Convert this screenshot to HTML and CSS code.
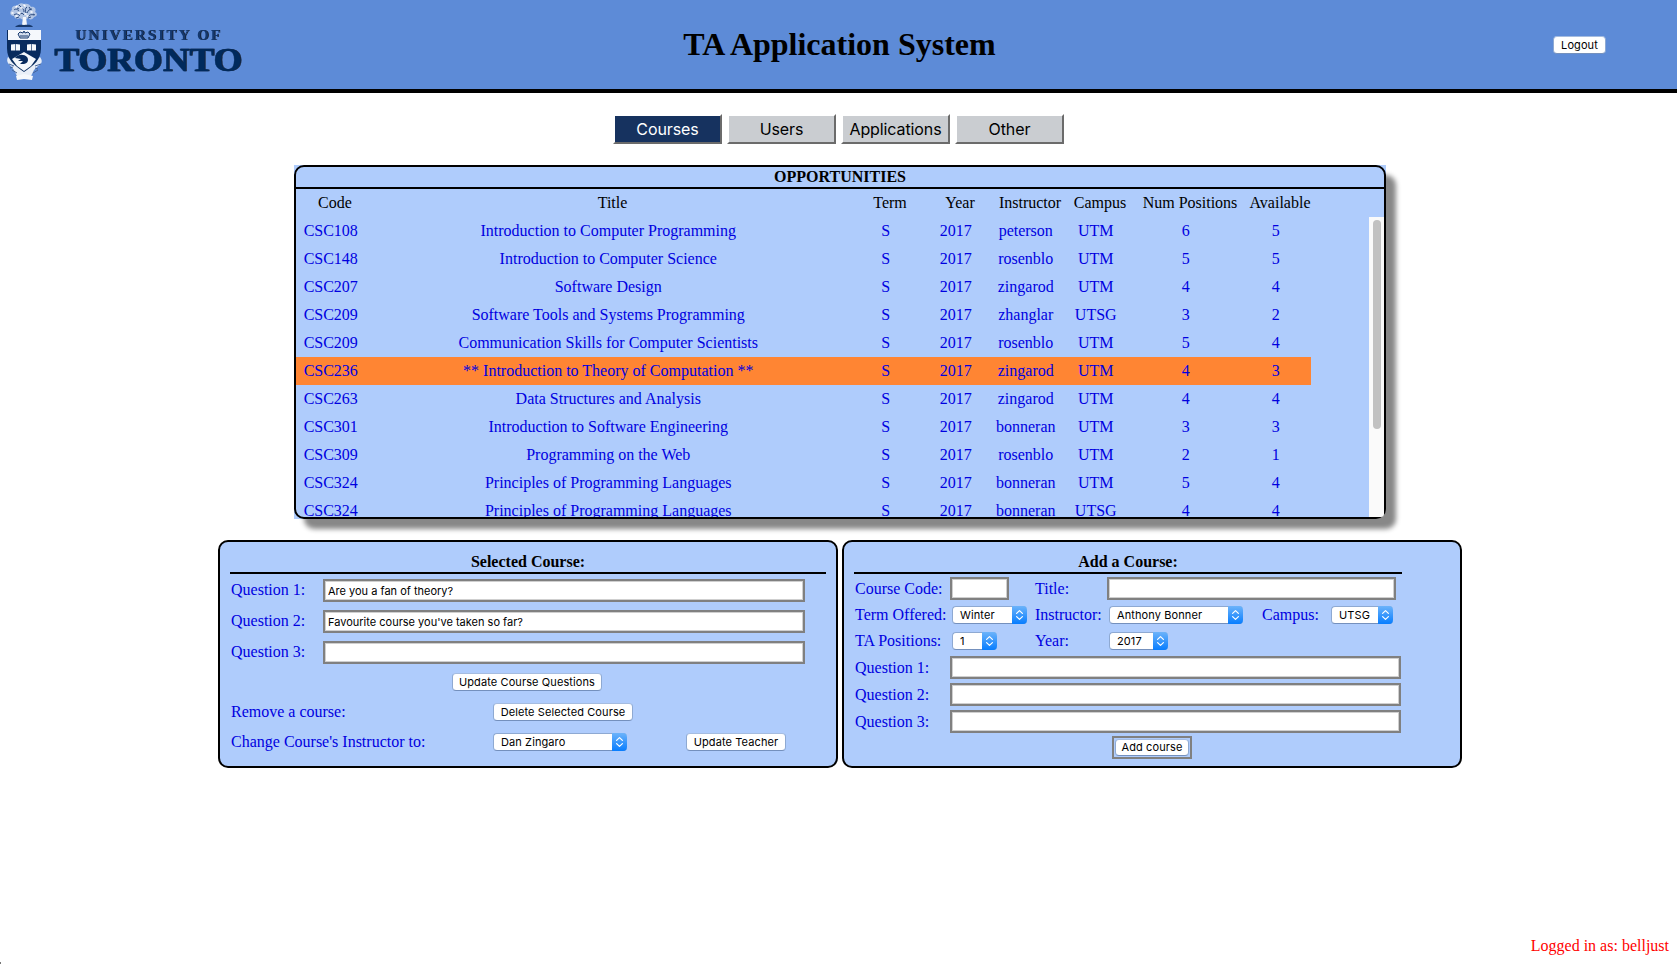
FILE: index.html
```html
<!DOCTYPE html>
<html lang="en">
<head>
<meta charset="utf-8">
<title>TA Application System</title>
<link rel="stylesheet" href="styles.css">
</head>
<body>
<svg class="defs" width="0" height="0">
  <symbol id="arrows" viewBox="0 0 15 18"><path d="M4.6 7.4 7.5 4.6l2.9 2.8M4.6 10.6l2.9 2.8 2.9-2.8" fill="none" stroke="#fff" stroke-width="1.2" stroke-linecap="round" stroke-linejoin="round"/></symbol>
</svg>
<header class="banner">
  <svg class="logo" viewBox="0 0 250 88">
    <g class="tree">
      <path d="M24 4c4-1 6 1 7 3 3-1 6 2 4 5 3 1 2 5-1 5-1 3-5 3-6 1-2 2-6 2-8 0-3 2-6 0-6-2-4 0-5-4-2-6-1-3 2-5 5-4 1-2 4-4 7-2z" fill="#b3c6e4"/>
      <path d="M14 10c2-2 4 0 5 1m-5 4c3-2 4-1 6 1m1-8c2 0 3 2 3 4m3-5c-2 1-2 4-1 6m6-4c-3 0-4 2-5 4m7 2c-3-1-5 0-6 2m-4-2c-1-2-3-2-4-1M19 5l2 2m8 0 2 3m2 4 2 1M17 8l2 1m-3 9 3-1m9 1 3-1" fill="none" stroke="#2d4c80" stroke-width="1"/>
      <path d="M16 7l1-1m7-1 1 1m-13 7 1 0m5 0h2m5 1h1m5-2h1m-11-4h1m5 8h1m-12 0h1" fill="none" stroke="#fff" stroke-width="1.6" stroke-linecap="round"/>
      <path d="M23 17h3l1 8h-5z" fill="#f4f7fb"/>
      <path d="M15 27c3-3 6-2 9-2s7-1 9 2z" fill="#17396d"/>
    </g>
    <path d="M8 57c-2 4 0 7 3 9l3 4 3 6 7 3 7-3 3-6 4-4c4-2 5-5 2-9l-4 3-12 9-12-9z" fill="#e9eff8"/>
    <path d="M9 64l5 2m27-2-6 2m-23 4 5 3m21-3-5 3M10 68l3-1m25 2-3-1" stroke="#46669a" stroke-width="1"/>
    <path d="M7 30h34v18c0 12-7 17-17 24C14 65 7 60 7 48z" fill="#082b5e"/>
    <path d="M8 30h33v10H8z" fill="#f5f8fc"/>
    <path d="M20 38l-2-4 2-2 3 1 1-2 1 2 3-1 2 2-2 4zM20 36h8" fill="#d4dfef" stroke="#17396d" stroke-width="1"/>
    <path d="M11 44.500l4.500-.5 4.500.5v6H11zM27 44.500l4.500-.5 4.500.5v6h-9z" fill="#f5f8fc"/>
    <path d="M15.500 44v7m16-7v7" stroke="#17396d" stroke-width=".7"/>
    <path d="M24 52 12 59l5 7 7 5 7-5 5-7z" fill="#f5f8fc"/>
    <path d="M15 58c3-4 9-4 12-1 2 3 1 6-3 7l-4 0 3-3-5 0 3-2z" fill="#082b5e"/>
    <path d="M16 76l8-2 9 2-1 4-8-1-7 1z" fill="#f5f8fc"/>
    <g class="wordmark">
      <text x="75" y="39.6" class="uni" textLength="145">UNIVERSITY OF</text>
      <text x="54" y="70.5" class="tor" textLength="188" lengthAdjust="spacingAndGlyphs">TORONTO</text>
    </g>
  </svg>
  <h1 class="title">TA Application System</h1>
  <div class="session"><button class="btn logout">Logout</button></div>
</header>

<nav class="tabs">
  <button class="tab active">Courses</button>
  <button class="tab">Users</button>
  <button class="tab">Applications</button>
  <button class="tab">Other</button>
</nav>

<section class="opps">
  <div class="opps-box">
    <h2 class="opps-title">OPPORTUNITIES</h2>
    <div class="row head"><span>Code</span><span>Title</span><span>Term</span><span>Year</span><span>Instructor</span><span>Campus</span><span>Num Positions</span><span>Available</span></div>
    <div class="scroll">
      <div class="rows">
        <div class="row"><span>CSC108</span><span>Introduction to Computer Programming</span><span>S</span><span>2017</span><span>peterson</span><span>UTM</span><span>6</span><span>5</span></div>
        <div class="row"><span>CSC148</span><span>Introduction to Computer Science</span><span>S</span><span>2017</span><span>rosenblo</span><span>UTM</span><span>5</span><span>5</span></div>
        <div class="row"><span>CSC207</span><span>Software Design</span><span>S</span><span>2017</span><span>zingarod</span><span>UTM</span><span>4</span><span>4</span></div>
        <div class="row"><span>CSC209</span><span>Software Tools and Systems Programming</span><span>S</span><span>2017</span><span>zhanglar</span><span>UTSG</span><span>3</span><span>2</span></div>
        <div class="row"><span>CSC209</span><span>Communication Skills for Computer Scientists</span><span>S</span><span>2017</span><span>rosenblo</span><span>UTM</span><span>5</span><span>4</span></div>
        <div class="row selected"><span>CSC236</span><span>** Introduction to Theory of Computation **</span><span>S</span><span>2017</span><span>zingarod</span><span>UTM</span><span>4</span><span>3</span></div>
        <div class="row"><span>CSC263</span><span>Data Structures and Analysis</span><span>S</span><span>2017</span><span>zingarod</span><span>UTM</span><span>4</span><span>4</span></div>
        <div class="row"><span>CSC301</span><span>Introduction to Software Engineering</span><span>S</span><span>2017</span><span>bonneran</span><span>UTM</span><span>3</span><span>3</span></div>
        <div class="row"><span>CSC309</span><span>Programming on the Web</span><span>S</span><span>2017</span><span>rosenblo</span><span>UTM</span><span>2</span><span>1</span></div>
        <div class="row"><span>CSC324</span><span>Principles of Programming Languages</span><span>S</span><span>2017</span><span>bonneran</span><span>UTM</span><span>5</span><span>4</span></div>
        <div class="row"><span>CSC324</span><span>Principles of Programming Languages</span><span>S</span><span>2017</span><span>bonneran</span><span>UTSG</span><span>4</span><span>4</span></div>
      </div>
      <div class="track"><div class="thumb"></div></div>
    </div>
  </div>
</section>

<main class="panels">
  <section class="panel">
    <h3 class="heading">Selected Course:</h3>
    <div class="sel-q"><label>Question 1:</label><input class="field" value="Are you a fan of theory?"></div>
    <div class="sel-q mid"><label>Question 2:</label><input class="field" value="Favourite course you've taken so far?"></div>
    <div class="sel-q"><label>Question 3:</label><input class="field"></div>
    <div class="center"><button class="btn update-q">Update Course Questions</button></div>
    <div class="manage tall"><label>Remove a course:</label><button class="btn delete">Delete Selected Course</button></div>
    <div class="manage"><label>Change Course's Instructor to:</label><span class="select teacher">Dan Zingaro<svg><use href="#arrows"/></svg></span><button class="btn update-t">Update Teacher</button></div>
  </section>
  <section class="panel add">
    <h3 class="heading">Add a Course:</h3>
    <div class="add-row r1"><label>Course Code:</label><input class="field code"><label>Title:</label><input class="field wide-title"></div>
    <div class="add-row r2"><label>Term Offered:</label><span class="select term">Winter<svg><use href="#arrows"/></svg></span><label>Instructor:</label><span class="select instr">Anthony Bonner<svg><use href="#arrows"/></svg></span><label>Campus:</label><span class="select campus">UTSG<svg><use href="#arrows"/></svg></span></div>
    <div class="add-row r3"><label>TA Positions:</label><span class="select count">1<svg><use href="#arrows"/></svg></span><label>Year:</label><span class="select year">2017<svg><use href="#arrows"/></svg></span></div>
    <div class="add-q"><label>Question 1:</label><input class="field"></div>
    <div class="add-q mid"><label>Question 2:</label><input class="field"></div>
    <div class="add-q"><label>Question 3:</label><input class="field"></div>
    <div class="submit"><span class="frame"><button class="btn add-btn">Add course</button></span></div>
  </section>
</main>

<footer class="status"><span class="hint"></span>Logged in as: belljust</footer>
</body>
</html>
```
FILE: styles.css
```css
* { box-sizing: border-box; }
body {
  margin: 0;
  height: 964px;
  display: flex;
  flex-direction: column;
  overflow: hidden;
  background: #fff;
  font: 16px/18px "Liberation Serif", "Times New Roman", serif;
}
button, input, .select { font-family: Inter, "Open Sans", sans-serif; margin: 0; }
.defs { position: absolute; }

.banner {
  display: grid;
  grid-template-columns: 250px 1fr 250px;
  height: 93px;
  flex: none;
  background: #5d8bd7;
  border-bottom: 4px solid #000;
}
.logo { width: 250px; height: 88px; }
.uni { font: bold 15px "Liberation Serif", serif; fill: #14386e; }
.tor { font: bold 34.5px "Liberation Serif", serif; fill: #002a5c; stroke: #002a5c; stroke-width: .4px; }
.wordmark { filter: drop-shadow(1.5px .5px 0 #000b); }
.title {
  margin: 0;
  align-self: center;
  text-align: center;
  font-size: 32px;
  line-height: 36px;
  padding: 0 0 2px 2px;
}
.session { padding: 35px 0 0 126px; }

.tabs {
  display: flex;
  gap: 5px;
  justify-content: center;
  margin-top: 21px;
}
.tab {
  width: 109px;
  height: 30px;
  padding: 0;
  border: 2px solid;
  border-color: #fff #6b6b6b #6b6b6b #fff;
  border-radius: 0;
  background: #cacdd1;
  color: #000;
  font-size: 16px;
  letter-spacing: -.1px;
}
.tab.active { background: #16325f; color: #fff; }

.opps {
  width: 1092px;
  height: 354px;
  margin: 21px 0 0 294px;
  flex: none;
  background: #afccfc;
  border-radius: 0 0 10px 0;
}
.opps-box {
  height: 354px;
  border: 2px solid #000;
  border-radius: 10px;
  box-shadow: 10px 10px 5px #888;
  background: #afccfc;
}
.opps-title {
  height: 22px;
  margin: 0;
  padding-top: 1px;
  border-bottom: 2px solid #000;
  font-size: 16px;
  text-align: center;
}
.row {
  display: grid;
  grid-template-columns: 70px 485px 70px 70px 70px 70px 110px 70px;
  width: 1015px;
  height: 28px;
  line-height: 28px;
  text-align: center;
  color: #0000e0;
}
.rows .row span { margin-left: -.5px; }
.row span { white-space: nowrap; }
.row.head { width: auto; padding-left: 4px; color: #000; }
.row.selected { background: #ff8533; }
.scroll {
  display: flex;
  justify-content: space-between;
  height: 300px;
  overflow: hidden;
}
.track { width: 15px; padding: 3px 3px 0 4px; background: #fafafa; border-bottom-right-radius: 3px; }
.thumb { height: 209px; border-radius: 4px; background: #c1c1c1; }

.panels {
  display: flex;
  gap: 4px;
  flex: none;
  margin: 21px 0 0 218px;
}
.panel {
  width: 620px;
  height: 228px;
  padding: 0 10px;
  border: 2px solid #000;
  border-radius: 10px;
  background: #afccfc;
  color: #0000e0;
}
.heading {
  height: 32px;
  margin: 0;
  padding-top: 11px;
  border-bottom: 2px solid #000;
  font-size: 16px;
  text-align: center;
  color: #000;
}
.add .heading { width: 548px; }
label { white-space: nowrap; padding-left: 1px; }
label:nth-of-type(n+2) { padding-left: 0; }

.sel-q, .add-q, .manage, .add-row { display: grid; align-items: center; }
.sel-q { grid-template-columns: 93px 482px; height: 33px; }
.sel-q.mid { height: 29px; }
.sel-q label { padding-bottom: 2px; }
.center { display: grid; place-items: center; height: 26px; padding-right: 2px; }
.manage { grid-template-columns: 263px 193px auto; height: 26px; }
.manage.tall { height: 34px; }

.add-row { grid-template-columns: 96px 85px 72px 155px 69px auto; justify-content: start; }
.r1 { height: 29px; }
.r2 { height: 24px; }
.r3 { height: 28px; }
.add-q { grid-template-columns: 96px 451px; height: 25px; }
.add-q.mid { height: 29px; }
.submit { display: flex; align-items: center; height: 26px; padding-left: 258px; }
.frame { display: flex; border: 2px solid #808080; padding: 1px; }

.field {
  width: 100%;
  height: 23px;
  padding: 0 3px;
  border: 2px solid #808080;
  border-radius: 0;
  background: #fff;
  box-shadow: inset 0 0 0 1px #cfcfcf;
  color: #000;
  font-size: 11px;
  outline: none;
}
.code { width: 59px; }
.wide-title { width: 289px; }

.btn {
  height: 18px;
  padding: 0;
  border: 1px solid #8ea9d2;
  border-top-color: #a5bce0;
  border-bottom-color: #7490bd;
  border-radius: 4px;
  background: #fff;
  color: #000;
  font-size: 11px;
  line-height: 16px;
  letter-spacing: .1px;
  white-space: nowrap;
}
.logout { width: 53px; }
.update-q { width: 150px; }
.delete { width: 140px; }
.update-t { width: 100px; }
.add-btn { width: 74px; height: 17px; line-height: 15px; }

.select {
  display: flex;
  justify-content: space-between;
  height: 18px;
  padding-left: 7px;
  border: 1px solid #8ea9d2;
  border-right: 0;
  border-bottom-color: #7490bd;
  border-radius: 4px;
  background: #fff;
  color: #000;
  font-size: 11px;
  line-height: 16px;
  letter-spacing: .1px;
  white-space: nowrap;
}
.select svg {
  width: 15px;
  height: 18px;
  margin: -1px 0;
  border-radius: 0 4px 4px 0;
  background: linear-gradient(#6cb3fa, #077dff);
}
.teacher { width: 134px; }
.term { width: 75px; margin-left: 2px; }
.count { width: 45px; margin-left: 2px; }
.instr { width: 134px; margin-left: 2px; }
.year { width: 59px; margin-left: 2px; }
.campus { width: 62px; }

.status {
  display: flex;
  justify-content: space-between;
  margin-top: auto;
  padding-right: 8px;
  height: 27px;
  color: #f00;
}
.hint { align-self: flex-end; width: 1px; height: 2px; background: #777; }
```
